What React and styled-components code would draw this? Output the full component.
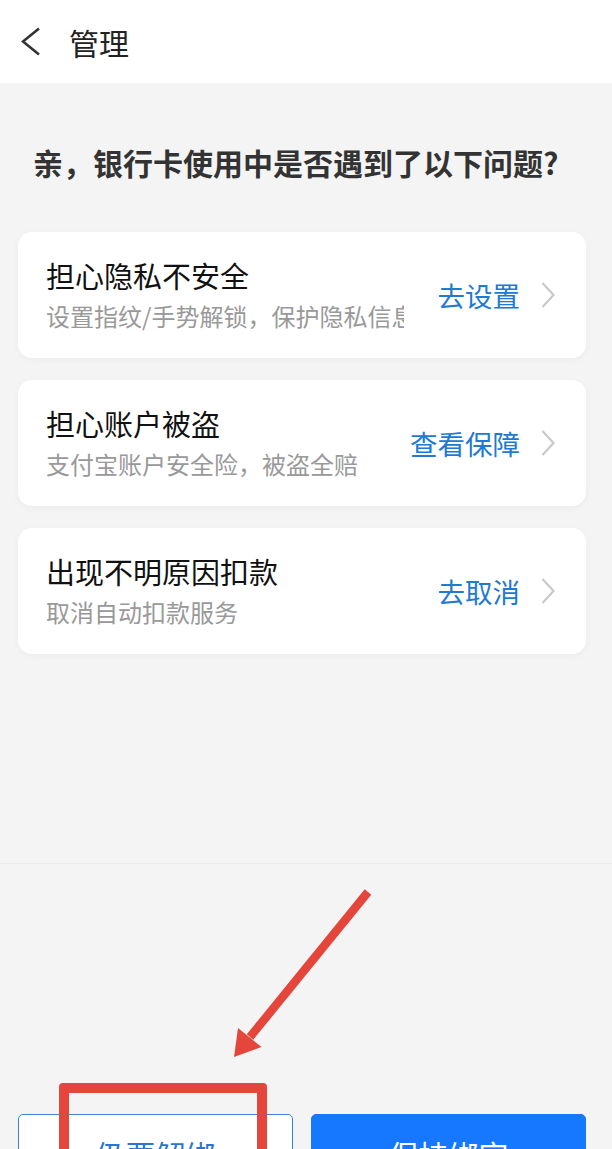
import React from "react";
import styled, { createGlobalStyle } from "styled-components";

const GlobalStyle = createGlobalStyle`
  html, body {
    margin: 0;
    padding: 0;
    background: #f4f4f4;
    overflow: hidden;
  }
  * { box-sizing: border-box; }
`;

const FONT = `"Noto Sans CJK SC", "Noto Sans", sans-serif`;

const Page = styled.div`
  position: relative;
  width: 612px;
  height: 1149px;
  overflow: hidden;
  background: #f4f4f4;
  font-family: ${FONT};
`;

const Header = styled.header`
  height: 83px;
  background: #ffffff;
  display: flex;
  align-items: center;
  padding-left: 20px;
  gap: 28px;
`;

const HeaderTitle = styled.h1`
  margin: 0;
  font-size: 30px;
  font-weight: 400;
  color: #222;
  line-height: 40px;
`;

const Main = styled.main`
  height: 780px;
  padding: 59px 26px 0 18px;
`;

const Question = styled.h2`
  margin: 0 0 50px 15px;
  font-size: 30px;
  line-height: 40px;
  font-weight: 700;
  color: #333;
  white-space: nowrap;
`;

const CardList = styled.div`
  display: flex;
  flex-direction: column;
  gap: 22px;
`;

const Card = styled.div`
  height: 126px;
  background: #fff;
  border-radius: 14px;
  box-shadow: 0 2px 8px rgba(0, 0, 0, 0.035);
  display: flex;
  align-items: center;
  padding: 0 31px 0 28px;
`;

const Info = styled.div`
  flex: 1;
  min-width: 0;
  display: flex;
  flex-direction: column;
  gap: 6px;
`;

const CardTitle = styled.div`
  font-size: 29px;
  line-height: 36px;
  color: #111;
  white-space: nowrap;
`;

const CardSub = styled.div`
  font-size: 24px;
  line-height: 34px;
  color: #999;
  white-space: nowrap;
  overflow: hidden;
  max-width: 358px;
`;

const Action = styled.div`
  display: flex;
  align-items: center;
  gap: 21px;
  font-size: 27.5px;
  line-height: 36px;
  color: #2079d4;
  white-space: nowrap;
`;

const Footer = styled.footer`
  border-top: 1px solid #ededed;
  padding: 250px 26px 0 18px;
`;

const ButtonRow = styled.div`
  display: grid;
  grid-template-columns: 1fr 1fr;
  gap: 18px;
`;

const Button = styled.button`
  height: 80px;
  min-width: 0;
  border-radius: 5px;
  font-family: ${FONT};
  font-size: 30px;
  border: 1.5px solid ${(p) => (p.$primary ? "#1677ff" : "#3d82d8")};
  background: ${(p) => (p.$primary ? "#1677ff" : "#fff")};
  color: ${(p) => (p.$primary ? "#fff" : "#2a74d2")};
  padding: 0;
`;

const Highlight = styled.div`
  position: absolute;
  left: 59px;
  top: 1083px;
  width: 208px;
  height: 120px;
  border: 10px solid #e5463b;
  border-radius: 4px;
  pointer-events: none;
`;

const ArrowLayer = styled.svg`
  position: absolute;
  left: 0;
  top: 0;
  width: 612px;
  height: 1149px;
  pointer-events: none;
`;

const BackIcon = () => (
  <svg width="20" height="30" viewBox="0 0 20 30" style={{ marginLeft: 1 }}>
    <polyline points="18,1.5 2,14.5 18,27.5" fill="none" stroke="#333" strokeWidth="2.6" strokeLinejoin="miter" />
  </svg>
);

const Chevron = () => (
  <svg width="14" height="26" viewBox="0 0 14 26">
    <polyline points="1.5,1 12.5,13 1.5,25" fill="none" stroke="#c9c9c9" strokeWidth="2.2" />
  </svg>
);

const items = [
  { title: "担心隐私不安全", sub: "设置指纹/手势解锁，保护隐私信息", action: "去设置" },
  { title: "担心账户被盗", sub: "支付宝账户安全险，被盗全赔", action: "查看保障" },
  { title: "出现不明原因扣款", sub: "取消自动扣款服务", action: "去取消" },
];

export default function App() {
  return (
    <>
      <GlobalStyle />
      <Page>
        <Header>
          <BackIcon />
          <HeaderTitle>管理</HeaderTitle>
        </Header>
        <Main>
          <Question>亲，银行卡使用中是否遇到了以下问题?</Question>
          <CardList>
            {items.map((it) => (
              <Card key={it.title}>
                <Info>
                  <CardTitle>{it.title}</CardTitle>
                  <CardSub>{it.sub}</CardSub>
                </Info>
                <Action>
                  {it.action}
                  <Chevron />
                </Action>
              </Card>
            ))}
          </CardList>
        </Main>
        <Footer>
          <ButtonRow>
            <Button>仍要解绑</Button>
            <Button $primary>保持绑定</Button>
          </ButtonRow>
        </Footer>
        <Highlight />
        <ArrowLayer viewBox="0 0 612 1149">
          <line x1="368" y1="892" x2="250" y2="1037" stroke="#e5463b" strokeWidth="8.5" />
          <polygon points="234,1057 238,1028 261.5,1047" fill="#e5463b" />
        </ArrowLayer>
      </Page>
    </>
  );
}
